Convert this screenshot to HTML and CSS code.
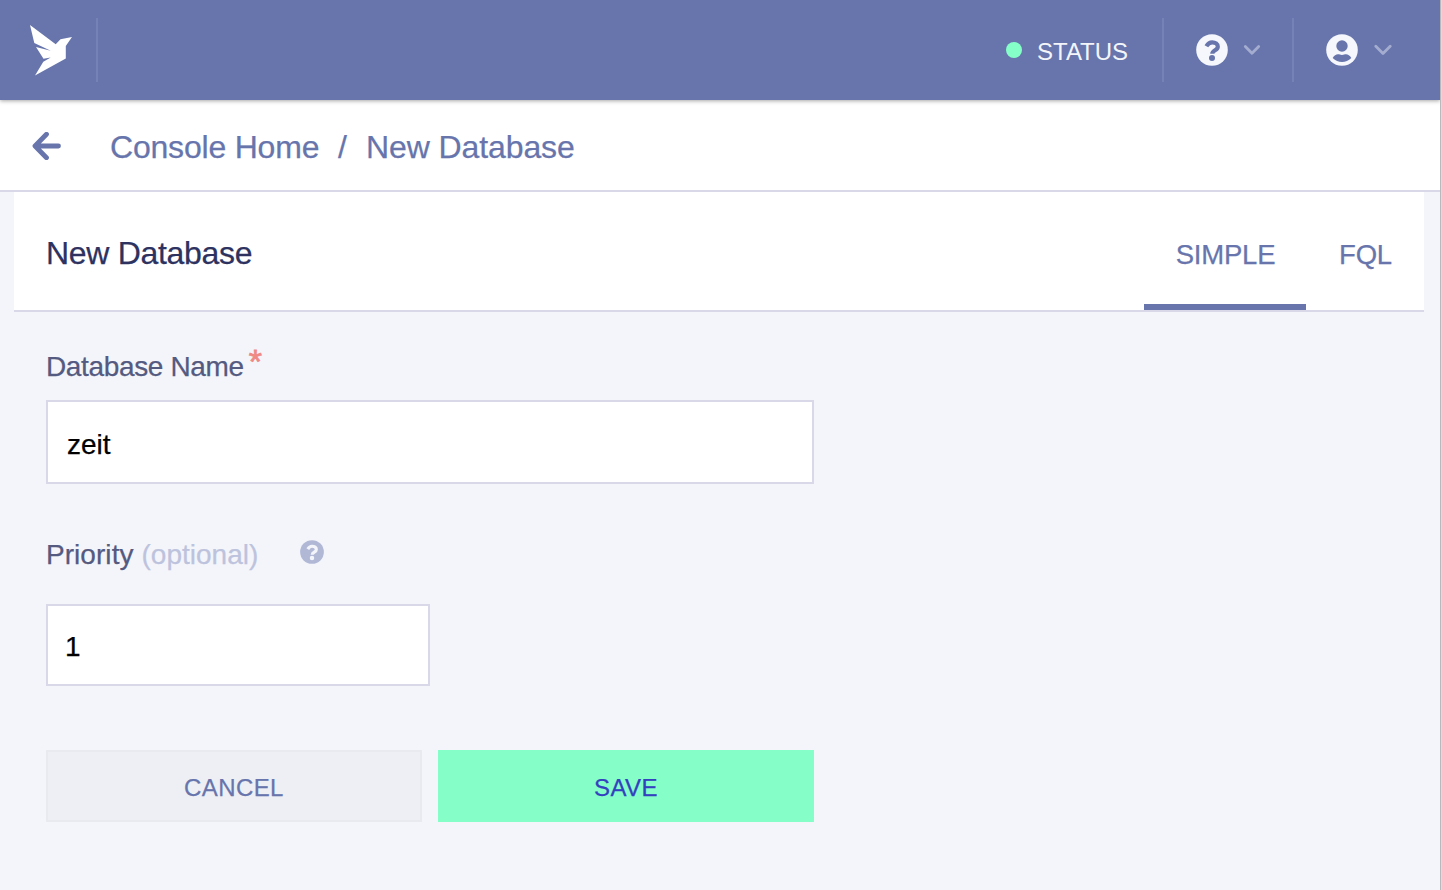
FILE: index.html
```html
<!DOCTYPE html>
<html lang="en">
<head>
<meta charset="utf-8">
<title>New Database</title>
<link rel="stylesheet" href="styles.css">
</head>
<body>
<div class="window">
  <header class="topbar">
    <svg class="logo" viewBox="0 0 44 52"><path fill="#fff" d="M2 1L27.700 20.300L32.500 15.200L44 13L37.800 22V34.500L7 51.500L15.300 37.700L22.700 33.400L15.500 34.800L8 23L22.700 26.800L6.300 19Z"/></svg>
    <div class="divider"></div>
    <a class="status"><span class="dot"></span><span>STATUS</span></a>
    <div class="divider"></div>
    <div class="menu">
      <svg class="menu-icon" viewBox="0 0 32 32"><circle cx="16" cy="16" r="15.800" fill="#f5f7fc"/><path d="M10.400 12.200C12 9.400 13.600 8.300 16.200 8.300C19.300 8.300 21.800 10 21.800 12.700C21.800 16.500 16.300 16 16.300 19.800" fill="none" stroke="#6775ac" stroke-width="4.200"/><circle cx="16" cy="24" r="3" fill="#6775ac"/></svg>
      <svg class="chevron" viewBox="0 0 18 12"><path d="M2.300 2.500L9 9.300L15.700 2.500"/></svg>
    </div>
    <div class="divider"></div>
    <div class="menu menu-user">
      <svg class="menu-icon" viewBox="0 0 32 32"><circle cx="16" cy="16" r="15.800" fill="#f5f7fc"/><circle cx="16" cy="12" r="5.700" fill="#6775ac"/><path d="M6.700 24C8.200 21.500 10 20.300 12 20.300C13.400 20.300 14.300 21 16 21C17.700 21 18.600 20.300 20 20.300C22 20.300 23.800 21.500 25.300 24C20 29.300 12 29.300 6.700 24Z" fill="#6775ac"/></svg>
      <svg class="chevron" viewBox="0 0 18 12"><path d="M1.800 2.300L9 9.500L16.200 2.300"/></svg>
    </div>
  </header>
  <nav class="crumbs">
    <svg class="back" viewBox="0 0 30 28"><path d="M14.500 2.300L3 14L14.500 25.700M3.500 14H26.500"/></svg>
    <a class="crumb-home">Console Home</a>
    <span class="slash">/</span>
    <a class="crumb-current">New Database</a>
  </nav>
  <main class="content">
    <div class="panel-head">
      <h1 class="title">New Database</h1>
      <div class="tabs">
        <a class="tab tab-active">SIMPLE</a>
        <a class="tab tab-fql">FQL</a>
      </div>
    </div>
    <form class="form">
      <label class="label">Database Name<span class="required">*</span></label>
      <div class="field"><span class="zeit">zeit</span></div>
      <div class="label label-priority"><span class="priority">Priority</span><span class="optional">(optional)</span>
        <svg class="help" viewBox="0 0 32 32"><circle cx="16" cy="16" r="15.800" fill="#b1b8d6"/><path d="M10.400 12.200C12 9.400 13.600 8.300 16.200 8.300C19.300 8.300 21.800 10 21.800 12.700C21.800 16.500 16.300 16 16.300 19.800" fill="none" stroke="#f3f5fa" stroke-width="4.200"/><circle cx="16" cy="24" r="3" fill="#f3f5fa"/></svg>
      </div>
      <div class="field field-small"><span>1</span></div>
      <div class="actions">
        <button type="button" class="button cancel">CANCEL</button>
        <button type="button" class="button save">SAVE</button>
      </div>
    </form>
  </main>
</div>
</body>
</html>
```
FILE: styles.css
```css
* { box-sizing: border-box; }
body {
  margin: 0;
  background: linear-gradient(90deg, #b9b9bc 50%, #dcdcdd 50%) right / 2px 100% no-repeat #f3f5fa;
  font-family: "Liberation Sans", Arial, sans-serif;
  -webkit-text-stroke: 0.25px currentColor;
}
.window { width: 1440px; height: 890px; background: #f3f5fa; overflow: hidden; }
.topbar {
  position: relative;
  display: flex;
  align-items: center;
  height: 100px;
  padding-left: 28px;
  background: #6775ac;
  box-shadow: 0 1px 4px rgba(0, 0, 0, 0.35);
}
.logo { width: 44px; height: 52px; margin-right: 24px; }
.divider { width: 2px; height: 64px; background: #7582b6; }
.status {
  display: flex;
  align-items: center;
  gap: 15px;
  margin-left: auto;
  width: 156px;
  color: #f3f5fa;
  font-size: 24px;
  letter-spacing: 0;
  line-height: 30px;
  white-space: nowrap;
  -webkit-text-stroke: 0;
}
.status span:last-child { padding-top: 3px; }
.dot { width: 16px; height: 16px; border-radius: 50%; background: #85fec8; }
.menu { display: flex; align-items: center; gap: 15px; width: 128px; padding-left: 32px; }
.menu-user { gap: 16px; width: 146px; }
.menu-icon { width: 32px; height: 32px; }
.chevron { width: 18px; height: 12px; fill: none; stroke: #a4add0; stroke-width: 2.8; stroke-linecap: round; stroke-linejoin: round; }
.crumbs {
  display: flex;
  align-items: center;
  height: 92px;
  padding: 4px 0 0 32px;
  border-bottom: 2px solid #d8d8e8;
  background: #fff;
  color: #6775ac;
  font-size: 32px;
}
.back { width: 30px; height: 28px; margin: 0 48px 2px 0; fill: none; stroke: #6775ac; stroke-width: 4.8; stroke-linecap: round; stroke-linejoin: round; }
.crumb-home { width: 228px; letter-spacing: -0.2px; }
.slash { width: 28px; }
.crumb-current { letter-spacing: -0.1px; }
.content { padding: 0 16px 0 14px; }
.panel-head {
  display: flex;
  justify-content: space-between;
  height: 120px;
  padding-left: 32px;
  border-bottom: 2px solid #d8d8e8;
  background: #fff;
}
.title { margin: 0; color: #2d325f; font-size: 32px; font-weight: 400; line-height: 122px; letter-spacing: -0.3px; }
.tabs { display: flex; }
.tab { height: 118px; color: #6775ac; font-size: 27.5px; line-height: 125px; letter-spacing: -0.2px; text-align: center; }
.tab-active { width: 162px; padding-left: 1px; border-bottom: 6px solid #6775ac; }
.tab-fql { width: 118px; padding-left: 1px; }
.form { width: 800px; padding: 38px 0 0 32px; }
.label { display: flex; height: 50px; color: #545a80; font-size: 28px; line-height: 34px; letter-spacing: -0.36px; white-space: nowrap; }
.required { margin-left: 5px; color: #f08986; font-size: 34px; line-height: 22px; -webkit-text-stroke: 0.8px currentColor; }
.field {
  display: flex;
  align-items: center;
  width: 768px;
  height: 84px;
  padding: 6px 0 0 19px;
  border: 2px solid #d8d8e8;
  background: #fff;
  color: #000;
  font-size: 28px;
}
.label-priority { height: 66px; margin-top: 54px; letter-spacing: 0.05px; }
.optional { margin-left: 8px; letter-spacing: 0; color: #bdc3dd; }
.help { width: 24px; height: 24px; margin: 2px 0 0 auto; }
.label-priority { width: 278px; }
.field-small { width: 384px; height: 82px; padding: 4px 0 0 17px; }
.actions { display: grid; grid-template-columns: 376px 376px; gap: 16px; margin-top: 64px; }
.button {
  height: 72px;
  padding: 4px 0 0;
  border: 0;
  background: #85fec8;
  color: #3440bf;
  font: 24px "Liberation Sans", Arial, sans-serif;
  letter-spacing: 0.4px;
}
.cancel { border: 2px solid #e9eaef; background: #eeeff5; color: #6775ac; }
```
